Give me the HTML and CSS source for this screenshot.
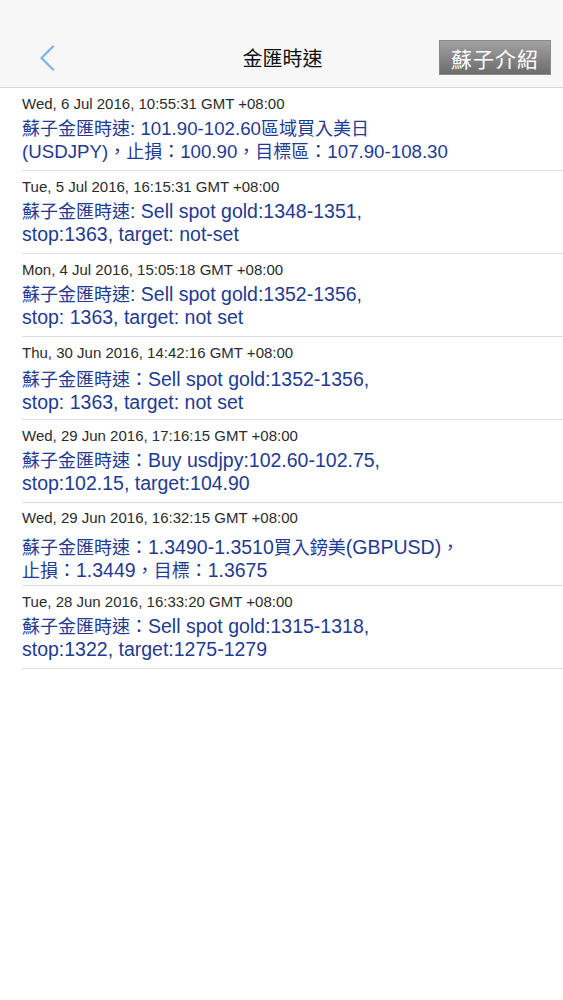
FILE: index.html
```html
<!DOCTYPE html>
<html>
<head lang="zh-Hant">
    <meta charset="UTF-8">
    <title>金匯時速</title>
    <link rel="stylesheet" href="styles.css">
</head>
<body>
    <div id="header">
        <div class="back">
            <svg width="16" height="26" viewBox="0 0 16 26"><path d="M14 1.5 L2.5 13 L14 24.5" fill="none" stroke="#7fb1ee" stroke-width="2.3" stroke-linecap="round" stroke-linejoin="round"/></svg>
        </div>
        <div class="title">金匯時速</div>
        <div class="right"><span class="btn">蘇子介紹</span></div>
    </div>
    <ul id="list">
        <li>
            <div class="date">Wed, 6 Jul 2016, 10:55:31 GMT +08:00</div>
            <div class="msg small"><span class="zh">蘇子金匯時速</span>: 101.90-102.60<span class="zh">區域買入美日</span><br>(USDJPY)<span class="zh">，止損：</span>100.90<span class="zh">，目標區：</span>107.90-108.30</div>
        </li>
        <li>
            <div class="date">Tue, 5 Jul 2016, 16:15:31 GMT +08:00</div>
            <div class="msg"><span class="zh">蘇子金匯時速</span>: Sell spot gold:1348-1351,<br>stop:1363, target: not-set</div>
        </li>
        <li>
            <div class="date">Mon, 4 Jul 2016, 15:05:18 GMT +08:00</div>
            <div class="msg"><span class="zh">蘇子金匯時速</span>: Sell spot gold:1352-1356,<br>stop: 1363, target: not set</div>
        </li>
        <li class="tight">
            <div class="date">Thu, 30 Jun 2016, 14:42:16 GMT +08:00</div>
            <div class="msg"><span class="zh">蘇子金匯時速：</span>Sell spot gold:1352-1356,<br>stop: 1363, target: not set</div>
        </li>
        <li>
            <div class="date">Wed, 29 Jun 2016, 17:16:15 GMT +08:00</div>
            <div class="msg"><span class="zh">蘇子金匯時速：</span>Buy usdjpy:102.60-102.75,<br>stop:102.15, target:104.90</div>
        </li>
        <li class="loose">
            <div class="date">Wed, 29 Jun 2016, 16:32:15 GMT +08:00</div>
            <div class="msg"><span class="zh">蘇子金匯時速：</span>1.3490-1.3510<span class="zh">買入鎊美</span>(GBPUSD)<span class="zh">，</span><br><span class="zh">止損：</span>1.3449<span class="zh">，目標：</span>1.3675</div>
        </li>
        <li>
            <div class="date">Tue, 28 Jun 2016, 16:33:20 GMT +08:00</div>
            <div class="msg"><span class="zh">蘇子金匯時速：</span>Sell spot gold:1315-1318,<br>stop:1322, target:1275-1279</div>
        </li>
    </ul>
</body>
</html>
```
FILE: styles.css
```css
*{
    margin: 0;
    padding: 0;
}
ul,ol{
    list-style: none;
}
body{
    background: #fff;
    font-family: "Liberation Sans", "Noto Sans CJK TC", sans-serif;
}
#header{
    height: 59px;
    padding-top: 28px;
    background: #f7f7f8;
    border-bottom: 1px solid #d9d9dc;
    display: grid;
    grid-template-columns: 1fr auto 1fr;
    align-items: center;
}
#header .back{
    padding-left: 39px;
    height: 26px;
}
#header .back svg{
    display: block;
}
#header .title{
    font-family: "Noto Sans CJK TC", sans-serif;
    font-size: 20px;
    color: #111;
    padding-left: 2px;
}
#header .right{
    display: flex;
    justify-content: flex-end;
    padding-right: 12px;
}
#header .btn{
    width: 112px;
    height: 35px;
    line-height: 35px;
    text-align: center;
    color: #fff;
    font-family: "Noto Sans CJK TC", sans-serif;
    font-size: 21px;
    letter-spacing: 1px;
    background: linear-gradient(#a2a2a2, #6c6c6c);
    border: 1px solid #8a8a8a;
    box-sizing: border-box;
}
#list{
    padding-left: 22px;
}
#list li{
    border-bottom: 1px solid #dedede;
    padding: 7px 0 7px;
}
#list .date{
    font-size: 15px;
    line-height: 18px;
    color: #2b2b2b;
}
#list .msg{
    margin-top: 4px;
    font-size: 19.5px;
    line-height: 23px;
    color: #1f3a94;
}
#list .msg.small{
    font-size: 18.7px;
}
#list .zh{
    font-family: "Noto Sans CJK TC", sans-serif;
    font-size: 18px;
    line-height: 1;
}
#list li.tight{
    padding-bottom: 5px;
}
#list li.tight .msg{
    margin-top: 6px;
}
#list li.loose{
    padding: 6px 0 3px;
}
#list li.loose .msg{
    margin-top: 9px;
}
```
